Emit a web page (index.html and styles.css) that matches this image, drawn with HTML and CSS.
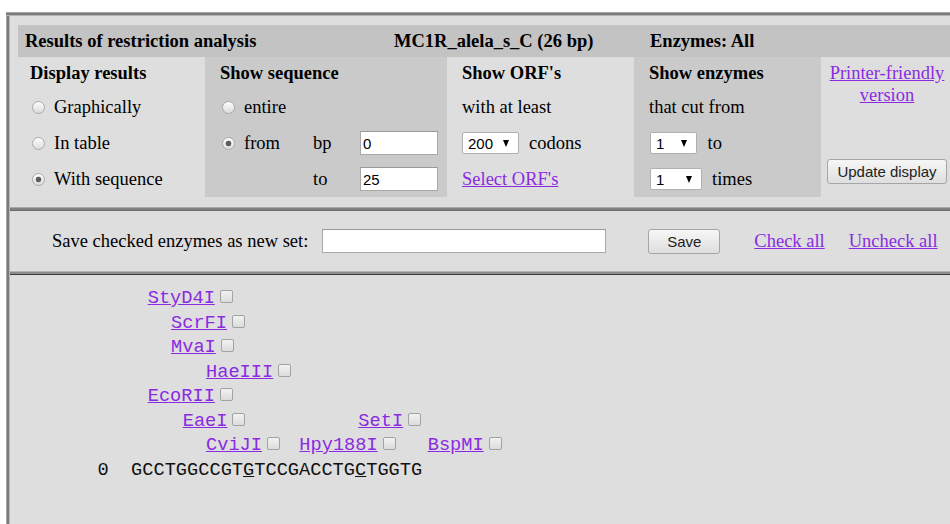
FILE: index.html
```html
<!DOCTYPE html>
<html lang="en">
<head>
<meta charset="utf-8">
<title>Restriction analysis – MC1R_alela_s_C</title>
<link rel="stylesheet" href="styles.css">
</head>
<body>
<div class="frameset">

  <!-- top frame: display options -->
  <section class="frame frame-controls">
    <div class="results">
      <div class="results-head">
        <span>Results of restriction analysis</span>
        <span>MC1R_alela_s_C (26 bp)</span>
        <span>Enzymes: All</span>
      </div>
      <form class="opts">
        <div class="col col-display">
          <div class="heading">Display results</div>
          <label class="choice"><input type="radio" name="view" class="radio"><span>Graphically</span></label>
          <label class="choice"><input type="radio" name="view" class="radio"><span>In table</span></label>
          <label class="choice"><input type="radio" name="view" class="radio" checked><span>With sequence</span></label>
        </div>
        <div class="col col-seq dark">
          <div class="heading">Show sequence</div>
          <label class="choice"><input type="radio" name="range" class="radio"><span>entire</span></label>
          <label class="choice row3"><input type="radio" name="range" class="radio" checked><span>from</span></label>
          <span class="unit row3">bp</span>
          <input type="text" class="field short row3" value="0">
          <span class="unit row4">to</span>
          <input type="text" class="field short row4" value="25">
        </div>
        <div class="col col-orf">
          <div class="heading">Show ORF's</div>
          <div class="line">with at least</div>
          <div class="line">
            <span class="select w57"><select><option>200</option></select></span>
            <span class="after">codons</span>
          </div>
          <div class="line"><a href="#orf" class="link">Select ORF's</a></div>
        </div>
        <div class="col col-enz dark">
          <div class="heading">Show enzymes</div>
          <div class="line">that cut from</div>
          <div class="line">
            <span class="select w47"><select><option>1</option></select></span>
            <span class="after">to</span>
          </div>
          <div class="line">
            <span class="select w52"><select><option>1</option></select></span>
            <span class="after">times</span>
          </div>
        </div>
        <div class="col col-print">
          <a href="#print" class="link print-link">Printer-friendly version</a>
          <button type="button" class="btn btn-update">Update display</button>
        </div>
      </form>
    </div>
  </section>

  <div class="splitter"></div>

  <!-- middle frame: enzyme set -->
  <section class="frame frame-save">
    <span class="save-label">Save checked enzymes as new set:</span>
    <input type="text" class="field set-name">
    <button type="button" class="btn btn-save">Save</button>
    <a href="#check" class="link check-all">Check all</a>
    <a href="#uncheck" class="link uncheck-all">Uncheck all</a>
  </section>

  <div class="splitter splitter-low"></div>

  <!-- bottom frame: restriction map over the sequence -->
  <section class="frame frame-map">
    <div class="map">
      <div class="map-line">
        <span class="site" style="left:137.7px"><a href="#StyD4I" class="link">StyD4I</a><input type="checkbox" class="cb"></span>
      </div>
      <div class="map-line">
        <span class="site" style="left:161px"><a href="#ScrFI" class="link">ScrFI</a><input type="checkbox" class="cb"></span>
      </div>
      <div class="map-line">
        <span class="site" style="left:161px"><a href="#MvaI" class="link">MvaI</a><input type="checkbox" class="cb"></span>
      </div>
      <div class="map-line">
        <span class="site" style="left:196px"><a href="#HaeIII" class="link">HaeIII</a><input type="checkbox" class="cb"></span>
      </div>
      <div class="map-line">
        <span class="site" style="left:137.7px"><a href="#EcoRII" class="link">EcoRII</a><input type="checkbox" class="cb"></span>
      </div>
      <div class="map-line">
        <span class="site" style="left:172.7px"><a href="#EaeI" class="link">EaeI</a><input type="checkbox" class="cb"></span>
        <span class="site" style="left:348.3px"><a href="#SetI" class="link">SetI</a><input type="checkbox" class="cb"></span>
      </div>
      <div class="map-line">
        <span class="site" style="left:196px"><a href="#CviJI" class="link">CviJI</a><input type="checkbox" class="cb"></span>
        <span class="site" style="left:289.3px"><a href="#Hpy188I" class="link">Hpy188I</a><input type="checkbox" class="cb"></span>
        <span class="site" style="left:417.7px"><a href="#BspMI" class="link">BspMI</a><input type="checkbox" class="cb"></span>
      </div>
      <div class="map-line">
        <span class="site seq" style="left:87.5px">0  GCCTGGCCGT<u>G</u>TCCGACCTG<u>C</u>TGGTG</span>
      </div>
    </div>
  </section>

</div>
</body>
</html>
```

FILE: styles.css
```css
html,
body {
  margin: 0;
  height: 100%;
  overflow: hidden;
  background: #fff;
}

body {
  font-family: "Liberation Serif", "Times New Roman", serif;
  font-size: 18.5px;
  color: #000;
}

/* frame set with its sunken outer edge */
.frameset {
  box-sizing: border-box;
  margin: 12px 0 0 6px;
  width: 980px;
  height: calc(100% - 12px);
  padding: 4px 0 0 4px;
  display: flex;
  flex-direction: column;
  background:
    linear-gradient(to bottom, #a4a4a4 0 1px, #7c7c7c 1px 3px, #b4b4b4 3px 4px) top left / 100% 4px no-repeat,
    linear-gradient(to right, #a4a4a4 0 1px, #7c7c7c 1px 3px, #b4b4b4 3px 4px) top left / 4px 100% no-repeat,
    #fff;
}

.frame {
  background: #dedede;
  overflow: hidden;
}

.splitter {
  height: 4px;
  flex: none;
  background: linear-gradient(to bottom, #a8a8a8 0 1px, #808080 1px 3px, #6c6c6c 3px 4px);
}

.splitter-low {
  background: linear-gradient(to bottom, #b4b4b4 0 1px, #8c8c8c 1px 3px, #3c3c3c 3px 4px);
}

.link {
  color: #8a2be2;
  text-decoration: underline;
}

/* ---------- top frame ---------- */
.frame-controls {
  height: 191px;
  flex: none;
}

.results {
  margin: 9px 0 0 8px;
  width: 935px;
}

.results-head {
  display: grid;
  grid-template-columns: 369px 256px 1fr;
  height: 32px;
  line-height: 32px;
  background: #c3c3c3;
  font-weight: bold;
}

.results-head span {
  padding-left: 7px;
  white-space: nowrap;
}

.opts {
  display: grid;
  grid-template-columns: 187px 242px 187px 187px 1fr;
  height: 140px;
  margin: 0;
}

.col {
  display: grid;
  grid-template-rows: 33px 35px 36px 36px;
  align-items: center;
  padding-left: 15px;
  white-space: nowrap;
}

.dark {
  background: #cacaca;
}

.heading {
  font-weight: bold;
}

.choice {
  display: flex;
  align-items: center;
}

.col-display {
  padding-left: 12px;
}

.col-display .choice {
  padding-left: 2px;
}

.radio {
  appearance: none;
  -webkit-appearance: none;
  box-sizing: border-box;
  width: 13px;
  height: 13px;
  margin: 0 9px 0 0;
  border: 1px solid #aaa;
  border-radius: 50%;
  background: linear-gradient(#fdfdfd, #dcdcdc);
}

.radio:checked {
  background:
    radial-gradient(circle, #5c5c5c 0 2.2px, #8a8a8a 2.7px, transparent 3.2px),
    linear-gradient(#fdfdfd, #dcdcdc);
}

/* sequence range: radio column, unit column, field column */
.col-seq {
  grid-template-columns: 93px 47px 78px;
}

.col-seq .heading {
  grid-column: 1 / -1;
}

.col-seq .choice {
  grid-column: 1;
  padding-left: 2px;
}

.col-seq .row3 {
  grid-row: 3;
}

.col-seq .row4 {
  grid-row: 4;
}

.col-seq .unit {
  grid-column: 2;
}

.col-seq .field {
  grid-column: 3;
}

.field {
  box-sizing: border-box;
  height: 24px;
  border: 1px solid #a9a9a9;
  border-top-color: #999;
  background: #fff;
  font: 15px "Liberation Sans", Arial, sans-serif;
  color: #000;
  padding: 0 2px;
  margin: 0;
}

.field.short {
  width: 78px;
}

.line {
  display: flex;
  align-items: center;
}

.after {
  margin-left: 10px;
}

.select {
  position: relative;
  display: inline-block;
  height: 22px;
}

.select select {
  appearance: none;
  -webkit-appearance: none;
  box-sizing: border-box;
  height: 22px;
  width: 100%;
  margin: 0;
  padding: 0 0 0 5px;
  border: 1px solid #b0b0b0;
  border-radius: 2px;
  background: #fff;
  font: 15px "Liberation Sans", Arial, sans-serif;
  color: #000;
}

.select::after {
  content: "";
  position: absolute;
  right: 10px;
  top: 8px;
  border-left: 3.5px solid transparent;
  border-right: 3.5px solid transparent;
  border-top: 7px solid #000;
  pointer-events: none;
}

.w57 { width: 57px; }
.w47 { width: 47px; margin-left: 1px; }
.w52 { width: 52px; margin-left: 1px; }

.col-enz .w47 + .after {
  margin-left: 10.5px;
}

.col-print {
  display: flex;
  flex-direction: column;
  align-items: center;
  justify-content: space-between;
  width: 132px;
  padding: 5px 0 13px;
  box-sizing: border-box;
}

.print-link {
  text-align: center;
  line-height: 22px;
  white-space: normal;
  width: 120px;
}

.btn {
  box-sizing: border-box;
  font: 15px "Liberation Sans", Arial, sans-serif;
  color: #222;
  border: 1px solid #a6a6a6;
  border-radius: 3px;
  background: linear-gradient(#f7f7f7, #dedede);
  padding: 0;
  margin: 0;
}

.btn-update {
  width: 120px;
  height: 25px;
}

/* ---------- middle frame ---------- */
.frame-save {
  height: 60px;
  flex: none;
  display: flex;
  align-items: center;
  padding-left: 42px;
  white-space: nowrap;
}

.set-name {
  width: 284px;
  margin-left: 14px;
}

.btn-save {
  width: 72px;
  height: 25px;
  margin-left: 42px;
}

.check-all {
  margin-left: 34px;
}

.uncheck-all {
  margin-left: 24px;
}

/* ---------- bottom frame ---------- */
.frame-map {
  flex: 1;
}

.map {
  padding-top: 11px;
  font-family: "Liberation Mono", "Courier New", monospace;
  font-size: 18.67px;
}

.map-line {
  position: relative;
  height: 24.5px;
  line-height: 24.5px;
}

.site {
  position: absolute;
  top: 0;
  white-space: pre;
}

.seq {
  color: #111;
}

.cb {
  appearance: none;
  -webkit-appearance: none;
  box-sizing: border-box;
  width: 13px;
  height: 13px;
  margin: 0 0 0 5px;
  vertical-align: baseline;
  border: 1px solid #a2a2a2;
  border-radius: 2px;
  background: linear-gradient(#f2f2f2, #dcdcdc);
}
```
